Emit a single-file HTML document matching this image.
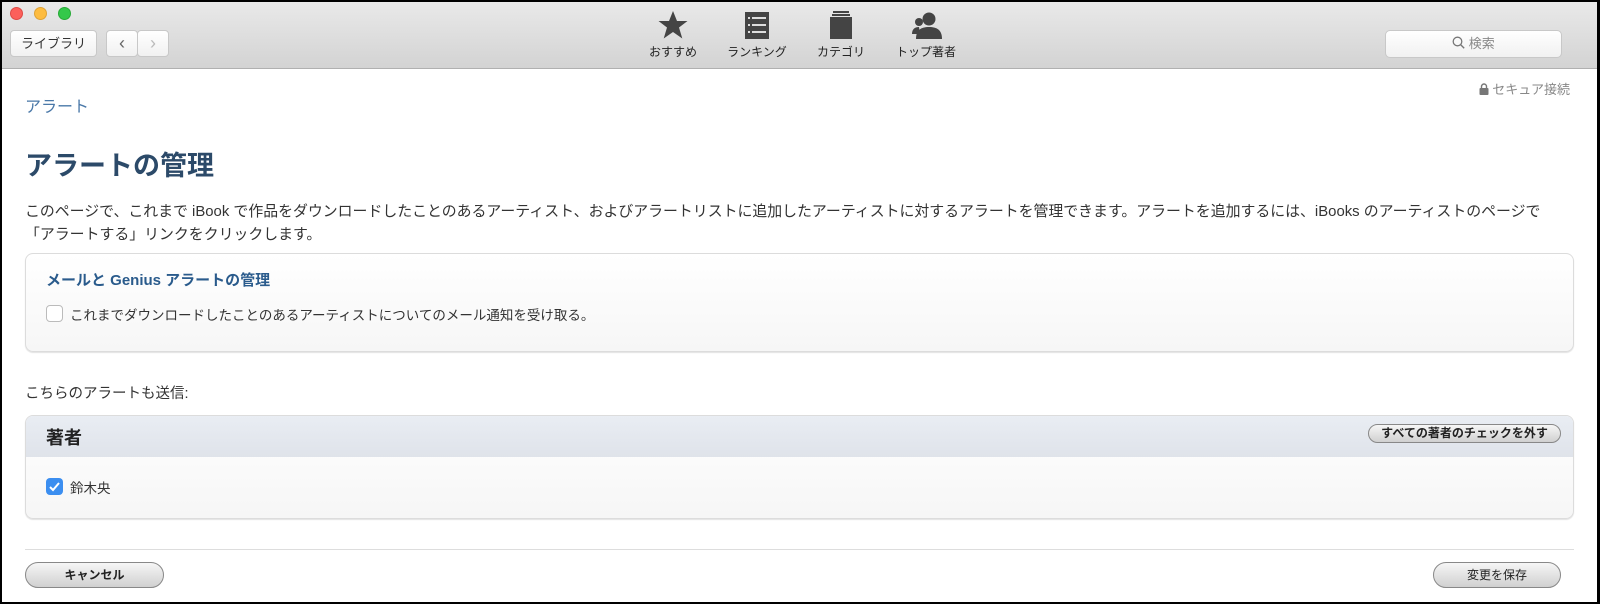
<!DOCTYPE html>
<html><head><meta charset="utf-8"><style>
*{margin:0;padding:0;box-sizing:border-box}
body{width:1600px;height:604px;background:#000;position:relative;overflow:hidden;font-family:"Liberation Sans","Noto Sans CJK JP",sans-serif;color:#333}
#win{position:absolute;left:2px;top:2px;width:1595px;height:600px;background:#fff;overflow:hidden}
#tb{position:absolute;left:0;top:0;width:100%;height:67px;background:linear-gradient(#e9e9e9,#d3d3d3);border-bottom:1px solid #b0b0b0}
.tl{position:absolute;top:5px;width:13px;height:13px;border-radius:50%}
.btn{position:absolute;background:linear-gradient(#fff,#f1f1f1);border:1px solid #c8c8c8;border-radius:4px;font-size:13px;color:#333;text-align:center}
.ti{position:absolute;top:8px;width:80px;text-align:center;font-size:12px;color:#222}
.ti svg{display:block;margin:0 auto 3px}
.a{position:absolute;white-space:nowrap}
.box{position:absolute;left:23px;width:1549px;border:1px solid #dcdcdc;border-radius:8px;background:linear-gradient(#fff,#f6f6f6);box-shadow:0 1px 1px #e2e2e2}
.pill{position:absolute;border:1px solid #888;border-radius:12px;background:linear-gradient(#f6f6f6,#d0d0d0);font-size:12px;font-weight:bold;text-align:center;color:#222}
</style></head><body><div id="win">
<div id="tb">
<div class="tl" style="left:8px;background:#fc605b;border:1px solid #de4a45"></div>
<div class="tl" style="left:32px;background:#fdbc40;border:1px solid #dea235"></div>
<div class="tl" style="left:56px;background:#34c84a;border:1px solid #27aa36"></div>
<div class="btn" style="left:8px;top:28px;width:87px;height:27px;line-height:25px">ライブラリ</div>
<div class="btn" style="left:104px;top:28px;width:32px;height:27px;line-height:24px;font-size:18px;color:#666">&#8249;</div>
<div class="btn" style="left:135px;top:28px;width:32px;height:27px;line-height:24px;font-size:18px;color:#bbb">&#8250;</div>
<div class="ti" style="left:631px"><svg width="32" height="30" viewBox="0 0 32 30"><path d="M16 1l4 10h10.5l-8.5 6.5 3.3 11L16 22l-9.3 6.5 3.3-11L1.5 11H12z" fill="#444"/></svg>おすすめ</div>
<div class="ti" style="left:715px"><svg width="32" height="30" viewBox="0 0 32 30"><rect x="4" y="2" width="24" height="27" fill="#444"/><g fill="#ddd"><rect x="7" y="7" width="2" height="2"/><rect x="11" y="7" width="14" height="2"/><rect x="7" y="14" width="2" height="2"/><rect x="11" y="14" width="14" height="2"/><rect x="7" y="21" width="2" height="2"/><rect x="11" y="21" width="14" height="2"/></g></svg>ランキング</div>
<div class="ti" style="left:799px"><svg width="32" height="30" viewBox="0 0 32 30"><rect x="8" y="1" width="16" height="2" fill="#444"/><rect x="7" y="4" width="18" height="2" fill="#444"/><rect x="5" y="7" width="22" height="22" fill="#444"/></svg>カテゴリ</div>
<div class="ti" style="left:884px"><svg width="32" height="30" viewBox="0 0 32 30"><circle cx="19" cy="9" r="6.5" fill="#444"/><path d="M6 29c0-9 5-12 13-12s13 3 13 12z" fill="#444"/><circle cx="9" cy="12" r="4" fill="#444"/><path d="M2 24c0-5 3-7 7-7l1 7z" fill="#444"/></svg>トップ著者</div>
<div class="btn" style="left:1383px;top:28px;width:177px;height:28px;line-height:26px;color:#888;border-radius:5px"><svg width="13" height="13" viewBox="0 0 13 13" style="vertical-align:-1px"><circle cx="5.5" cy="5.5" r="4.3" fill="none" stroke="#777" stroke-width="1.3"/><path d="M8.6 8.6l3.6 3.6" stroke="#777" stroke-width="1.4"/></svg> 検索</div>
</div>
<div class="a" style="left:23px;top:91px;font-size:16px;color:#4a78a8">アラート</div>
<div class="a" style="right:27px;top:77px;font-size:13px;color:#888"><svg width="10" height="12" viewBox="0 0 10 12" style="vertical-align:-1px"><path d="M2.5 5V3.5a2.5 2.5 0 015 0V5" fill="none" stroke="#777" stroke-width="1.4"/><rect x="0.5" y="5" width="9" height="7" rx="1" fill="#777"/></svg> セキュア接続</div>
<div class="a" style="left:23px;top:142px;font-size:27px;font-weight:bold;color:#2c4a69">アラートの管理</div>
<div class="a" style="left:23px;top:199px;font-size:14.9px;line-height:23px;color:#333">このページで、これまで iBook で作品をダウンロードしたことのあるアーティスト、およびアラートリストに追加したアーティストに対するアラートを管理できます。アラートを追加するには、iBooks のアーティストのページで<br>「アラートする」リンクをクリックします。</div>
<div class="box" style="top:251px;height:99px">
<div class="a" style="left:20px;top:15px;font-size:15px;font-weight:bold;color:#2a5b8c">メールと Genius アラートの管理</div>
<div class="a" style="left:20px;top:51px;width:17px;height:17px;border:1px solid #bbb;border-radius:4px;background:#fff"></div>
<div class="a" style="left:44px;top:50px;font-size:13.5px;color:#333">これまでダウンロードしたことのあるアーティストについてのメール通知を受け取る。</div>
</div>
<div class="a" style="left:23px;top:380px;font-size:14.5px;color:#333">こちらのアラートも送信:</div>
<div class="box" style="top:413px;height:104px;overflow:hidden">
<div style="position:absolute;left:0;top:0;width:100%;height:41px;background:linear-gradient(#e9edf3,#dfe3ea)"></div>
<div class="a" style="left:20px;top:8px;font-size:18px;font-weight:bold;color:#222">著者</div>
<div class="pill" style="left:1342px;top:8px;width:193px;height:19px;line-height:17px">すべての著者のチェックを外す</div>
<div class="a" style="left:20px;top:62px;width:17px;height:17px;border-radius:4px;background:#3b8ef0"><svg width="17" height="17" viewBox="0 0 17 17"><path d="M4 9l3 3 6-7" fill="none" stroke="#fff" stroke-width="2"/></svg></div>
<div class="a" style="left:44px;top:61px;font-size:13.5px;color:#333">鈴木央</div>
</div>
<div style="position:absolute;left:23px;top:547px;width:1549px;height:1px;background:#ddd"></div>
<div class="pill" style="left:23px;top:560px;width:139px;height:26px;line-height:24px;border-radius:13px">キャンセル</div>
<div class="pill" style="left:1431px;top:560px;width:128px;height:26px;line-height:24px;border-radius:13px;font-weight:normal">変更を保存</div>
</div></body></html>
